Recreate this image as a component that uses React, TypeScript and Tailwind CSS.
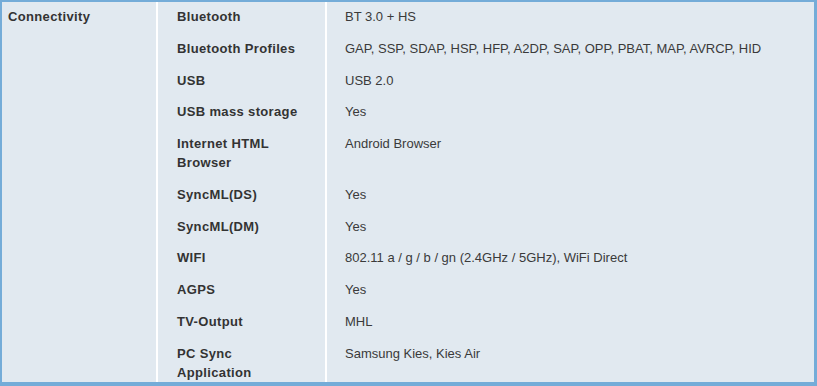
const specs: { label: string[]; value: string }[] = [
  { label: ["Bluetooth"], value: "BT 3.0 + HS" },
  { label: ["Bluetooth Profiles"], value: "GAP, SSP, SDAP, HSP, HFP, A2DP, SAP, OPP, PBAT, MAP, AVRCP, HID" },
  { label: ["USB"], value: "USB 2.0" },
  { label: ["USB mass storage"], value: "Yes" },
  { label: ["Internet HTML", "Browser"], value: "Android Browser" },
  { label: ["SyncML(DS)"], value: "Yes" },
  { label: ["SyncML(DM)"], value: "Yes" },
  { label: ["WIFI"], value: "802.11 a / g / b / gn (2.4GHz / 5GHz), WiFi Direct" },
  { label: ["AGPS"], value: "Yes" },
  { label: ["TV-Output"], value: "MHL" },
  { label: ["PC Sync", "Application"], value: "Samsung Kies, Kies Air" },
];

const App = () => {
  return (
    <div className="w-[817px] h-[386px] overflow-hidden bg-white">
      <div
        className="h-full border-t-2 border-l-2 border-r-[3px] border-b-4 border-[#74acd8] overflow-hidden text-[13px] leading-[19px] text-[#3a3a3a]"
        style={{ fontFamily: '"Liberation Sans", Arial, sans-serif' }}
      >
        <div className="grid grid-cols-[154px_167px_1fr] gap-x-[2px] bg-white h-full">
          <div className="row-span-11 bg-[#e1e9f0] pl-[6px] pt-[5px] font-bold tracking-[0.35px] text-[#333]">
            Connectivity
          </div>
          {specs.map((s, i) => (
            <div key={i} className="contents">
              <div className="bg-[#e1e9f0] pl-[19px] pt-[5px] pb-[7.75px] font-bold tracking-[0.35px] text-[#333]">
                {s.label.map((l) => (
                  <div key={l}>{l}</div>
                ))}
              </div>
              <div className="bg-[#e1e9f0] pl-[18px] pt-[5px] pb-[7.75px]">{s.value}</div>
            </div>
          ))}
        </div>
      </div>
    </div>
  );
};

export default App;
